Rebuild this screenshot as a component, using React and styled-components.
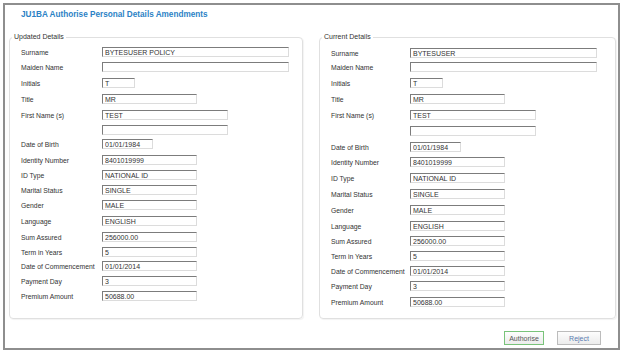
import React from 'react';
import styled, { createGlobalStyle } from 'styled-components';

const GlobalStyle = createGlobalStyle`
  html, body {
    margin: 0;
    padding: 0;
    background: #ffffff;
  }
  body {
    font-family: 'Liberation Sans', Arial, sans-serif;
  }
`;

const Frame = styled.div`
  box-sizing: border-box;
  width: 617px;
  height: 347px;
  margin: 3px;
  border: 2px solid #8e8e8e;
  background: #ffffff;
  display: flex;
  flex-direction: column;
`;

const Title = styled.h1`
  margin: 5px 0 0 16px;
  font-size: 8.2px;
  line-height: 10px;
  font-weight: bold;
  color: #2c82c5;
`;

const Panels = styled.div`
  display: flex;
  gap: 16px;
  height: 287px;
  margin-top: 12px;
  padding: 0 2px 0 4px;
`;

const Panel = styled.fieldset`
  box-sizing: border-box;
  width: ${p => (p.$width ? p.$width + 'px' : 'auto')};
  flex: ${p => (p.$width ? '0 0 auto' : '1 1 auto')};
  margin: 0;
  padding: ${p => 5 + (p.$offset || 0)}px 0 0 11px;
  border: 1px solid #e0e0e0;
  border-radius: 4px;
  box-shadow: 1px 1px 1px rgba(0, 0, 0, 0.05);
  min-width: 0;
`;

const Legend = styled.legend`
  margin-left: -9px;
  padding: 0 2px;
  font-size: 7px;
  line-height: 10px;
  color: #333333;
`;

const Row = styled.div`
  display: flex;
  align-items: flex-start;
  height: ${p => p.$h}px;
`;

const Label = styled.label`
  width: ${p => p.$w}px;
  flex: 0 0 auto;
  margin-top: 1px;
  font-size: 6.8px;
  line-height: 10px;
  color: #333333;
  white-space: nowrap;
`;

const Field = styled.input`
  box-sizing: border-box;
  width: ${p => p.$w}px;
  height: 10px;
  margin: 0;
  padding: 0 2px;
  border-style: solid;
  border-width: 1px;
  border-color: #7c7c7c #dcdcdc #dcdcdc #7c7c7c;
  background: #ffffff;
  font-family: 'Liberation Sans', Arial, sans-serif;
  font-size: 7px;
  line-height: 8px;
  color: #333333;
  outline: none;
`;

const Footer = styled.div`
  display: flex;
  justify-content: flex-end;
  gap: 13px;
  margin-top: 12px;
  padding-right: 17px;
`;

const Button = styled.button`
  box-sizing: border-box;
  width: ${p => p.$w}px;
  height: 14px;
  padding: 0;
  border: 1px solid ${p => (p.$primary ? '#79c37a' : '#bcbcbc')};
  background: linear-gradient(#fdfdfd, #ececec);
  font-family: 'Liberation Sans', Arial, sans-serif;
  font-size: 7px;
  color: ${p => (p.$primary ? '#555555' : '#5a7bb0')};
`;

const fields = [
  { label: 'Surname', key: 'surname', w: 187 },
  { label: 'Maiden Name', key: 'maiden', w: 187 },
  { label: 'Initials', key: 'initials', w: 33 },
  { label: 'Title', key: 'title', w: 95 },
  { label: 'First Name (s)', key: 'first', w: 126 },
  { label: '', key: 'second', w: 126 },
  { label: 'Date of Birth', key: 'dob', w: 51 },
  { label: 'Identity Number', key: 'id', w: 95 },
  { label: 'ID Type', key: 'idType', w: 95 },
  { label: 'Marital Status', key: 'marital', w: 95 },
  { label: 'Gender', key: 'gender', w: 95 },
  { label: 'Language', key: 'language', w: 95 },
  { label: 'Sum Assured', key: 'sum', w: 95 },
  { label: 'Term in Years', key: 'term', w: 95 },
  { label: 'Date of Commencement', key: 'commencement', w: 95 },
  { label: 'Payment Day', key: 'payDay', w: 95 },
  { label: 'Premium Amount', key: 'premium', w: 95 }
];

const base = {
  maiden: '',
  initials: 'T',
  title: 'MR',
  first: 'TEST',
  second: '',
  dob: '01/01/1984',
  id: '8401019999',
  idType: 'NATIONAL ID',
  marital: 'SINGLE',
  gender: 'MALE',
  language: 'ENGLISH',
  sum: '256000.00',
  term: '5',
  commencement: '01/01/2014',
  payDay: '3',
  premium: '50688.00'
};

const updated = { ...base, surname: 'BYTESUSER POLICY' };
const current = { ...base, surname: 'BYTESUSER' };

// row tops as measured in each panel, turned into row heights
const leftTops = [47, 62, 78, 94, 110, 125, 139, 155, 170, 185, 200, 216, 232, 247, 261, 276, 291];
const rightTops = [48, 62, 78, 94, 110, 126, 142, 157, 173, 189, 205, 221, 236, 251, 266, 281, 297];

function heights(tops) {
  return tops.map(function(t, i) {
    return i < tops.length - 1 ? tops[i + 1] - t : 15;
  });
}

function DetailsPanel({ legend, values, tops, labelW, width, offset }) {
  const hs = heights(tops);
  return (
    <Panel $width={width} $offset={offset}>
      <Legend>{legend}</Legend>
      {fields.map(function(f, i) {
        return (
          <Row key={f.key} $h={hs[i]}>
            <Label $w={labelW}>{f.label}</Label>
            <Field $w={f.w} readOnly value={values[f.key]} />
          </Row>
        );
      })}
    </Panel>
  );
}

export default function App() {
  return (
    <>
      <GlobalStyle />
      <Frame>
        <Title>JU1BA Authorise Personal Details Amendments</Title>
        <Panels>
          <DetailsPanel legend="Updated Details" values={updated} tops={leftTops} labelW={81} width={294} />
          <DetailsPanel legend="Current Details" values={current} tops={rightTops} labelW={79} offset={1} />
        </Panels>
        <Footer>
          <Button $primary $w={40}>Authorise</Button>
          <Button $w={44}>Reject</Button>
        </Footer>
      </Frame>
    </>
  );
}
